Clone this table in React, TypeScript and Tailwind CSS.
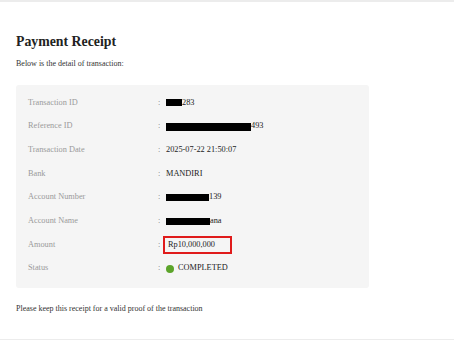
import type { ReactNode } from 'react';

type Row = {
  label: string;
  value: ReactNode;
};

// blacked-out part of a sensitive value
function Mask({ width, height = 7 }: { width: number; height?: number }) {
  return <span className="inline-block bg-black align-middle" style={{ width, height }} />;
}

const rows: Row[] = [
  { label: 'Transaction ID', value: <><Mask width={16} />283</> },
  { label: 'Reference ID', value: <><Mask width={85} height={8} />493</> },
  { label: 'Transaction Date', value: '2025-07-22 21:50:07' },
  { label: 'Bank', value: 'MANDIRI' },
  { label: 'Account Number', value: <><Mask width={43} />139</> },
  { label: 'Account Name', value: <><Mask width={44} />ana</> },
  {
    label: 'Amount',
    value: (
      <span className="-ml-[3px] inline-flex h-[18px] w-[69px] items-center border-2 border-[#e01b1b] pl-[3px]">
        Rp10,000,000
      </span>
    ),
  },
  {
    label: 'Status',
    value: (
      <span className="inline-flex items-center gap-[4px]">
        <span className="inline-block h-[8px] w-[8px] rounded-full bg-[#5ca42a]" />
        COMPLETED
      </span>
    ),
  },
];

export default function App() {
  return (
    <div
      className="h-[341px] w-[454px] overflow-hidden bg-white"
      style={{ fontFamily: '"Liberation Serif", "Times New Roman", serif' }}
    >
      <div className="h-[340px] border-t-2 border-b border-[#ececec] px-[16px] pt-[30px]">
        <h1 className="text-[13.8px] font-bold leading-[20px] text-[#222]">Payment Receipt</h1>
        <p className="mt-[7px] text-[8px] leading-[10px] text-[#333]">Below is the detail of transaction:</p>

        <div className="mt-[16px] w-[353px] rounded-[3px] bg-[#f5f5f5] pb-[7px] pt-[6px] pl-[12px]">
          {rows.map((row) => (
            <div key={row.label} className="flex h-[23.7px] items-center text-[8.3px]">
              <div className="w-[130px] text-[#9a9a9a]">{row.label}</div>
              <div className="w-[8px] text-[#777]">:</div>
              <div className="flex items-center text-[#222]">{row.value}</div>
            </div>
          ))}
        </div>

        <p className="mt-[16px] text-[8px] leading-[10px] text-[#333]">
          Please keep this receipt for a valid proof of the transaction
        </p>
      </div>
    </div>
  );
}
